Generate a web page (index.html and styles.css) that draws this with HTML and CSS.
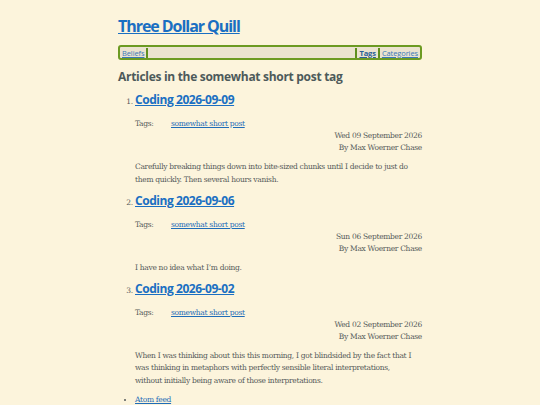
FILE: index.html
```html
<!DOCTYPE html>
<html>
<head>
<meta charset="utf-8">
<link rel="stylesheet" href="styles.css">
</head>
<body>
<div class="page">
  <header>
    <h1 class="site-title"><a href="#">Three Dollar Quill</a></h1>
    <nav class="nav">
      <a href="#" class="nav-link">Beliefs</a>
      <span class="sep"></span>
      <span class="spacer"></span>
      <span class="sep"></span>
      <a href="#" class="nav-link bold">Tags</a>
      <span class="sep"></span>
      <a href="#" class="nav-link">Categories</a>
    </nav>
  </header>
  <main>
    <h2 class="page-heading">Articles in the somewhat short post tag</h2>
    <ol class="articles">
      <li class="article">
        <h3 class="article-title"><a href="#">Coding 2026-09-09</a></h3>
        <div class="tags"><span class="tags-label">Tags:</span><a href="#">somewhat short post</a></div>
        <div class="meta">Wed 09 September 2026</div>
        <div class="meta">By Max Woerner Chase</div>
        <p class="summary">Carefully breaking things down into bite-sized chunks until I decide to just do them quickly. Then several hours vanish.</p>
      </li>
      <li class="article">
        <h3 class="article-title"><a href="#">Coding 2026-09-06</a></h3>
        <div class="tags"><span class="tags-label">Tags:</span><a href="#">somewhat short post</a></div>
        <div class="meta">Sun 06 September 2026</div>
        <div class="meta">By Max Woerner Chase</div>
        <p class="summary">I have no idea what I’m doing.</p>
      </li>
      <li class="article">
        <h3 class="article-title"><a href="#">Coding 2026-09-02</a></h3>
        <div class="tags"><span class="tags-label">Tags:</span><a href="#">somewhat short post</a></div>
        <div class="meta">Wed 02 September 2026</div>
        <div class="meta">By Max Woerner Chase</div>
        <p class="summary">When I was thinking about this this morning, I got blindsided by the fact that I was thinking in metaphors with perfectly sensible literal interpretations, without initially being aware of those interpretations.</p>
      </li>
    </ol>
    <ul class="feeds">
      <li><a href="#">Atom feed</a></li>
    </ul>
  </main>
</div>
</body>
</html>
```
FILE: styles.css
```css
html, body {
  margin: 0;
  padding: 0;
  background: #fcf4dc;
}
body {
  font-family: "DejaVu Serif", serif;
  color: #555a5a;
  font-size: 7.5px;
  letter-spacing: -0.3px;
}
a { color: #1f6cb8; }
.page {
  width: 304px;
  margin: 0 auto;
  padding-top: 15px;
}
.site-title {
  margin: 0;
  font-family: "Open Sans", sans-serif;
  font-weight: 700;
  font-size: 16px;
  line-height: 22px;
  letter-spacing: -1.05px;
}
.site-title a { color: #1a6fc2; }
.nav {
  margin-top: 8px;
  height: 11px;
  display: flex;
  align-items: center;
  border: 2px solid #6c9a22;
  border-radius: 3px;
  background: #ebe3cf;
  padding: 0 2px;
  font-family: "Open Sans", sans-serif;
  font-size: 7.5px;
  letter-spacing: -0.1px;
}
.nav-link { color: #3a78b8; }
.nav-link.bold { font-weight: 700; color: #2a5f96; }
.sep {
  width: 2px;
  height: 10px;
  background: #5f8f1e;
  margin: 0 2px;
}
.spacer { flex: 1; }
.page-heading {
  margin: 9px 0 0;
  font-family: "Open Sans", sans-serif;
  font-weight: 700;
  font-size: 12px;
  line-height: 16px;
  color: #4d5a5a;
  letter-spacing: -0.3px;
}
.articles {
  margin: 7px 0 0;
  padding-left: 17px;
}
.article { line-height: 12px; }
.article-title {
  margin: 0 0 10px;
  font-family: "Open Sans", sans-serif;
  font-weight: 700;
  font-size: 12px;
  line-height: 16px;
  letter-spacing: -0.45px;
}
.article-title a { color: #1a6fc2; }
.tags-label {
  display: inline-block;
  width: 36px;
}
.meta { text-align: right; }
.summary {
  margin: 7px 7px 6.5px 0;
  line-height: 12.5px;
}
.feeds {
  margin: 8px 0 0;
  padding-left: 17px;
}
```
